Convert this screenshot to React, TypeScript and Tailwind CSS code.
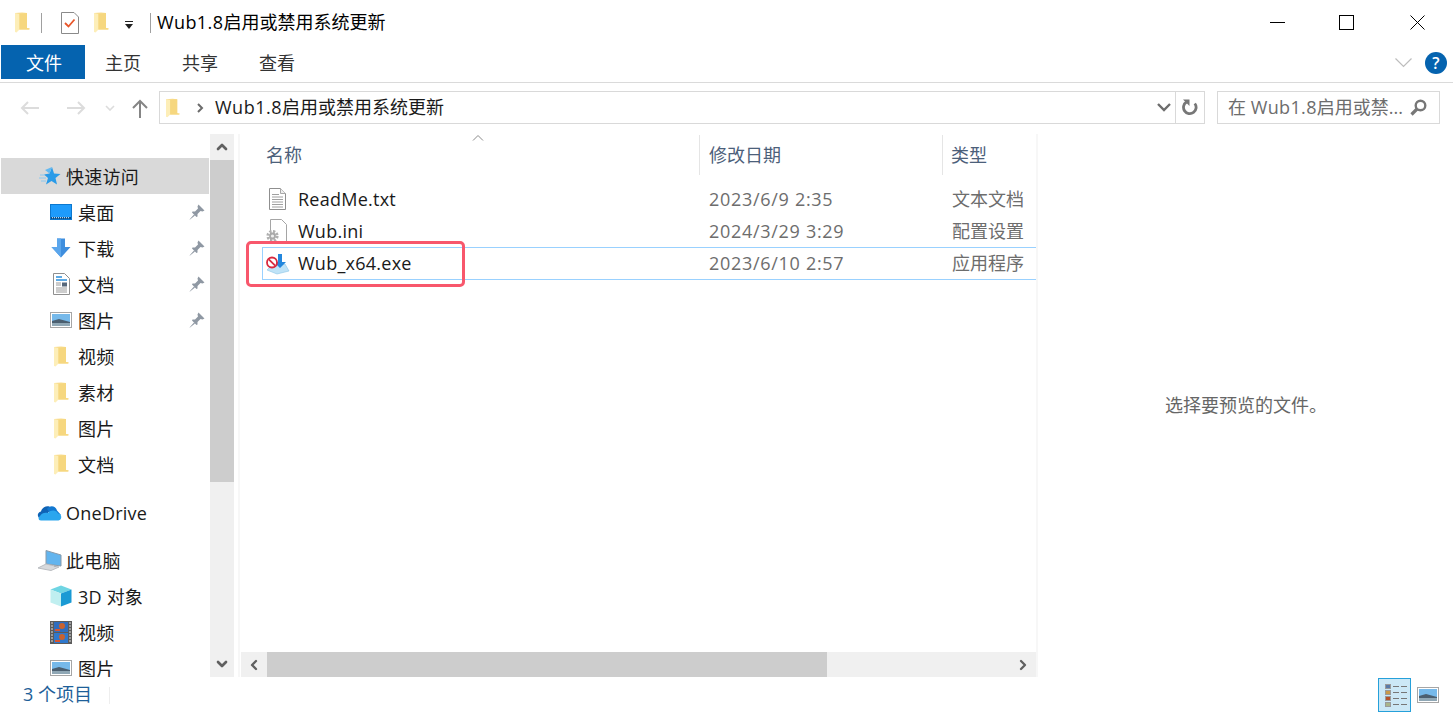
import { ChevronDown, ChevronLeft, ChevronRight, ChevronUp } from "lucide-react";

const FONT = "font-['Open_Sans','Noto_Sans_CJK_SC',sans-serif]";

function Folder({ className = "" }: { className?: string }) {
  return (
    <svg viewBox="0 0 15 21" className={className}>
      <path d="M0 1 L7 0.5 L12 1 L12 16 L14.5 16 L14.5 17.5 L4.5 17.5 L0.8 19 Z" fill="#f9dc8b" />
      <path d="M0 1 L4.5 2 L4.5 17.5 L1.5 20.5 L0 20 Z" fill="#fdeeb8" />
      <path d="M4.5 2 L12 1 L12 16 L14.5 17.5 L4.5 17.5 Z" fill="#f6d77f" />
    </svg>
  );
}

function Pin() {
  return (
    <svg viewBox="0 0 16 16" className="w-4 h-4 text-[#8f98a3]">
      <path d="M9.5 0.5 L15.5 6.5 L13.5 7.5 L11.5 7 L8.5 10 L8.5 12.5 L7.5 13 L3 8.5 L3.5 7.5 L6 7.5 L9 4.5 L8.5 2.5 Z" fill="currentColor" />
      <path d="M5 10.5 L0.5 15.5 L1 15.5 L6 11.5 Z" fill="currentColor" />
    </svg>
  );
}

function PicIcon({ className = "" }: { className?: string }) {
  return (
    <svg viewBox="0 0 22 16" className={className}>
      <rect x="0.5" y="0.5" width="21" height="15" fill="#fff" stroke="#a6a6a6" />
      <rect x="2" y="2" width="18" height="12" fill="#76b9ea" />
      <path d="M2 9 L9 7 L20 10 L20 14 L2 14 Z" fill="#4b5f70" />
      <rect x="2" y="11" width="18" height="3" fill="#8fa7b5" />
    </svg>
  );
}

function DocLines({ className = "" }: { className?: string }) {
  return (
    <svg viewBox="0 0 17 22" className={className}>
      <path d="M0.5 0.5 H11.5 L16.5 5.5 V21.5 H0.5 Z" fill="#fff" stroke="#8f8f8f" />
      <path d="M11.5 0.5 V5.5 H16.5" fill="#eee" stroke="#a8a8a8" />
      <path d="M3 6.5 H10 M3 9 H14 M3 11.5 H14 M3 14 H14 M3 16.5 H14 M3 19 H14" stroke="#a0a0a0" />
    </svg>
  );
}

const navIcons: Record<string, React.ReactNode> = {
  star: (
    <svg viewBox="0 0 22 20" className="w-[22px] h-5">
      <path d="M13 1 L15 7.5 L21.5 8 L16.5 12 L18 18.5 L12.5 15 L7 18.5 L9 12 L5 8.5 L10.5 7.5 Z" fill="#2a9be8" />
      <path d="M1 9 H6 M0 12 H7 M2 15 H7" stroke="#8cc8ef" />
      <path d="M6 4 L13 1 L10.5 7.5 Z" fill="#63b9f1" />
    </svg>
  ),
  desktop: (
    <svg viewBox="0 0 22 16" className="w-[22px] h-4">
      <rect x="0.5" y="0.5" width="21" height="15" fill="#1e9bfb" stroke="#0c78cf" />
      <rect x="1" y="13" width="20" height="2" fill="#0a4f8a" />
      <path d="M2 13.7 H20" stroke="#e6f3ff" strokeDasharray="1 1" />
    </svg>
  ),
  download: (
    <svg viewBox="0 0 20 20" className="w-5 h-5">
      <path d="M6 0.5 H14 V9 H19.5 L10 19.5 L0.5 9 H6 Z" fill="#3e8ede" />
      <path d="M6 0.5 H10 V19.5 L0.5 9 H6 Z" fill="#5ba6ec" />
    </svg>
  ),
  doc: (
    <svg viewBox="0 0 17 22" className="w-[17px] h-[22px]">
      <path d="M0.5 0.5 H11.5 L16.5 5.5 V21.5 H0.5 Z" fill="#fff" stroke="#8f8f8f" />
      <path d="M3 4 H9 M3 7 H14" stroke="#2a8fdc" strokeWidth="1.4" />
      <path d="M3 10 H8 M3 12 H8 M3 15 H14 M3 17 H14 M3 19 H14" stroke="#9a9a9a" />
      <rect x="9" y="9.5" width="5" height="4" fill="#56677a" />
    </svg>
  ),
  pic: <PicIcon className="w-[22px] h-4" />,
  folder: <Folder className="w-[15px] h-[21px]" />,
  onedrive: (
    <svg viewBox="0 0 25 17" className="w-[25px] h-[17px]">
      <path d="M4 15 C0 14 -0.5 8.5 4 7.5 C5 3 11 0.5 14.5 4 L11 9 Z" fill="#0f63b5" />
      <path d="M10 5 C13 0.5 19 2 20 6.5 L24 11 L13 9 Z" fill="#1278d1" />
      <path d="M4 16.5 C1 16.5 1 13.5 3 12 C5 8 9 8.5 11 9 C14 5.5 19.5 6 21 9.5 C25 9.5 25.5 15.5 21.5 16.5 Z" fill="#2ba6ee" />
    </svg>
  ),
  pc: (
    <svg viewBox="0 0 25 21" className="w-[25px] h-[21px]">
      <path d="M9 0.5 L24 5 V16 L9 14 Z" fill="#62b4ee" stroke="#8a9aa8" />
      <path d="M1 18 L9 14 L22 17 L14 20.5 Z" fill="#d7d9dc" stroke="#b9bcc0" />
      <path d="M18 15 V17" stroke="#9aa0a6" />
    </svg>
  ),
  cube: (
    <svg viewBox="0 0 22 22" className="w-[22px] h-[22px]">
      <path d="M11 0.5 L21.5 4.5 L11 8.5 L0.5 4.5 Z" fill="#6fd5e3" />
      <path d="M0.5 4.5 L11 8.5 V21.5 L0.5 17.5 Z" fill="#c0eff0" />
      <path d="M21.5 4.5 L11 8.5 V21.5 L21.5 17.5 Z" fill="#1a9ad4" />
    </svg>
  ),
  video: (
    <svg viewBox="0 0 22 23" className="w-[22px] h-[23px]">
      <rect width="22" height="23" fill="#5b5b5b" />
      <path d="M1 2 H3 M1 5 H3 M1 8 H3 M1 11 H3 M1 14 H3 M1 17 H3 M1 20 H3 M19 2 H21 M19 5 H21 M19 8 H21 M19 11 H21 M19 14 H21 M19 17 H21 M19 20 H21" stroke="#ddd" />
      <rect x="4" y="1" width="14" height="10" fill="#2f6dbe" />
      <rect x="4" y="12" width="14" height="10" fill="#2f78cc" />
      <circle cx="12" cy="5" r="3" fill="#c9622f" />
      <circle cx="12" cy="16" r="3" fill="#c9622f" />
      <rect x="5" y="8" width="5" height="2" fill="#d8552d" />
      <rect x="5" y="19" width="5" height="2" fill="#d8552d" />
    </svg>
  ),
};

const navItems = [
  { label: "桌面", icon: "desktop", pin: true },
  { label: "下载", icon: "download", pin: true },
  { label: "文档", icon: "doc", pin: true },
  { label: "图片", icon: "pic", pin: true },
  { label: "视频", icon: "folder", pin: false },
  { label: "素材", icon: "folder", pin: false },
  { label: "图片", icon: "folder", pin: false },
  { label: "文档", icon: "folder", pin: false },
];

function NavRow({ label, icon, pin }: { label: string; icon: string; pin?: boolean }) {
  return (
    <div className="flex items-center shrink-0 h-9">
      <div className="w-[22px] ml-[49px] flex justify-center shrink-0">{navIcons[icon]}</div>
      <span className="ml-[6px] mt-[2px] flex-1 text-[18px] tracking-[0.2px] text-[#1a1a1a]">{label}</span>
      {pin && (
        <span className="mr-[4px]">
          <Pin />
        </span>
      )}
    </div>
  );
}

function TopRow({ label, icon, className = "" }: { label: string; icon: string; className?: string }) {
  return (
    <div className={`flex items-center h-9 shrink-0 ${className}`}>
      <div className="w-[25px] ml-[36px] flex justify-center shrink-0">{navIcons[icon]}</div>
      <span className="ml-[4px] mt-[2px] text-[18px] tracking-[0.25px] text-[#1a1a1a]">{label}</span>
    </div>
  );
}

const files = [
  { name: "ReadMe.txt", date: "2023/6/9 2:35", type: "文本文档", icon: "txt" },
  { name: "Wub.ini", date: "2024/3/29 3:29", type: "配置设置", icon: "ini" },
  { name: "Wub_x64.exe", date: "2023/6/10 2:57", type: "应用程序", icon: "exe" },
];

function FileIcon({ kind }: { kind: string }) {
  if (kind === "txt") return <DocLines className="w-[17px] h-[22px] ml-[3px]" />;
  if (kind === "ini")
    return (
      <svg viewBox="0 0 22 24" className="w-[22px] h-6">
        <path d="M4.5 0.5 H15.5 L20.5 5.5 V23.5 H4.5 Z" fill="#fff" stroke="#a5a5a5" />
        <circle cx="6.5" cy="17" r="4.6" fill="none" stroke="#b0b0b0" strokeWidth="3" strokeDasharray="2.2 1.4" />
        <circle cx="6.5" cy="17" r="3.4" fill="#a9a9a9" />
        <circle cx="6.5" cy="17" r="1.6" fill="#eee" />
      </svg>
    );
  return (
    <svg viewBox="0 0 24 22" className="w-6 h-[22px]">
      <path d="M1 17 L7 11 L19 11 L23 18 L11 21 Z" fill="#bfe3f7" stroke="#8cc4e6" strokeWidth="0.6" />
      <path d="M12 1 H16 V9 H20 L14 15 L8 9 H12 Z" fill="#2387dd" />
      <circle cx="6" cy="9.5" r="5" fill="#fff" stroke="#d8293f" strokeWidth="1.8" />
      <path d="M2.8 6.3 L9.2 12.7" stroke="#d8293f" strokeWidth="1.8" />
    </svg>
  );
}

export default function App() {
  return (
    <div className={`${FONT} w-[1453px] h-[713px] bg-white relative overflow-hidden flex flex-col`}>
      {/* title bar */}
      <div className="h-[45px] flex items-center shrink-0">
        <Folder className="w-[15px] h-[21px] ml-[15px]" />
        <div className="w-px h-[20px] bg-[#a0a0a0] ml-[11px]" />
        <svg viewBox="0 0 18 22" className="w-[18px] h-[22px] ml-[19px]">
          <path d="M0.5 0.5 H13 L17.5 5 V21.5 H0.5 Z" fill="#fff" stroke="#8a8a8a" />
          <path d="M4 11 L7.5 14.5 L13.5 7.5" fill="none" stroke="#e8562a" strokeWidth="1.8" />
        </svg>
        <Folder className="w-[15px] h-[21px] ml-[15px]" />
        <svg viewBox="0 0 10 9" className="w-[10px] h-[9px] ml-[15px] mt-[6px]">
          <path d="M1 0.5 H9" stroke="#222" />
          <path d="M1 3 H9 L5 8 Z" fill="#222" />
        </svg>
        <div className="w-px h-[20px] bg-[#a0a0a0] ml-[16px]" />
        <span className="ml-[6px] text-[18px] text-black">
          <span className="tracking-[0.4px]">Wub1.8</span>启用或禁用系统更新
        </span>
        <div className="flex-1" />
        <div className="w-[15px] h-px bg-black" />
        <div className="w-[15px] h-[15px] border border-black ml-[54px]" />
        <svg viewBox="0 0 15 15" className="w-[15px] h-[15px] ml-[56px] mr-[28px]">
          <path d="M0.5 0.5 L14.5 14.5 M14.5 0.5 L0.5 14.5" stroke="#000" />
        </svg>
      </div>

      {/* ribbon tabs */}
      <div className="h-[38px] flex items-start shrink-0 border-b border-[#dadada]">
        <div className="ml-px w-[84px] h-[34px] pl-[2px] pt-[2px] bg-[#0563af] text-white text-[18px] flex items-center justify-center">文件</div>
        <span className="ml-5 mt-[5px] text-[18px] text-[#333]">主页</span>
        <span className="ml-[41px] mt-[5px] text-[18px] text-[#333]">共享</span>
        <span className="ml-[41px] mt-[5px] text-[18px] text-[#333]">查看</span>
        <div className="flex-1" />
        <svg viewBox="0 0 17 10" className="w-[17px] h-[10px] mt-[13px]">
          <path d="M0.5 0.5 L8.5 8.5 L16.5 0.5" fill="none" stroke="#bdbdbd" strokeWidth="1.2" />
        </svg>
        <div className="w-[22px] h-[22px] rounded-full bg-[#0563af] text-white text-[16px] font-semibold flex items-center justify-center ml-[13px] mr-[6px] mt-[7px]">?</div>
      </div>

      {/* address row */}
      <div className="h-[52px] flex items-center shrink-0 pb-[3px]">
        <svg viewBox="0 0 20 16" className="w-5 h-4 ml-5 text-[#dcdcdc]">
          <path d="M19 8 H2 M8 2 L2 8 L8 14" fill="none" stroke="currentColor" strokeWidth="2" />
        </svg>
        <svg viewBox="0 0 20 16" className="w-5 h-4 ml-[26px] text-[#dcdcdc]">
          <path d="M1 8 H18 M12 2 L18 8 L12 14" fill="none" stroke="currentColor" strokeWidth="2" />
        </svg>
        <svg viewBox="0 0 10 6" className="w-[10px] h-[6px] ml-[19px]">
          <path d="M1 1 L5 5 L9 1" fill="none" stroke="#dcdcdc" strokeWidth="1.6" />
        </svg>
        <svg viewBox="0 0 16 20" className="w-4 h-5 ml-[17px] mt-[2px]">
          <path d="M8 19 V2 M1 9 L8 2 L15 9" fill="none" stroke="#858585" strokeWidth="2" />
        </svg>
        <div className="ml-[11px] w-[1046px] h-[33px] border border-[#d9d9d9] flex items-center">
          <Folder className="w-[14px] h-5 ml-[6px]" />
          <svg viewBox="0 0 7 10" className="w-[7px] h-[10px] ml-[17px]">
            <path d="M1 1 L5 5 L1 9" fill="none" stroke="#6b6b6b" strokeWidth="2" />
          </svg>
          <span className="ml-[11px] text-[18px] text-[#1a1a1a]">
            <span className="tracking-[0.5px]">Wub1.8</span>启用或禁用系统更新
          </span>
          <div className="flex-1" />
          <svg viewBox="0 0 14 9" className="w-[14px] h-[9px] mr-[4px]">
            <path d="M1 1 L7 7 L13 1" fill="none" stroke="#6d6d6d" strokeWidth="2.4" />
          </svg>
          <div className="w-px h-full bg-[#d9d9d9]" />
          <svg viewBox="0 0 16 17" className="w-4 h-[17px] mx-[6px]">
            <path d="M4.5 3 A6.3 6.3 0 1 0 12.8 4.5" fill="none" stroke="#777" strokeWidth="2.8" />
            <path d="M1 0.5 H7.5 V7 Z" fill="#777" />
          </svg>
        </div>
        <div className="ml-3 w-[223px] h-[33px] border border-[#d9d9d9] flex items-center">
          <span className="ml-[10px] flex-1 text-[18px] text-[#6d6d6d]">
            在 <span className="tracking-[0.35px]">Wub1.8</span>启用或禁...
          </span>
          <svg viewBox="0 0 17 17" className="w-[17px] h-[17px] mr-3">
            <circle cx="10.5" cy="6.5" r="4.8" fill="none" stroke="#777" strokeWidth="2.4" />
            <path d="M7 10 L1.5 15.5" stroke="#777" strokeWidth="3.2" />
          </svg>
        </div>
      </div>

      {/* body */}
      <div className="h-[543px] mt-[-1px] flex shrink-0">
        {/* nav pane */}
        <div className="w-[208px] ml-px mr-px overflow-hidden flex flex-col shrink-0 pt-6">
          <div className="bg-[#d9d9d9]">
            <TopRow label="快速访问" icon="star" />
          </div>
          {navItems.map((item, i) => (
            <NavRow key={i} label={item.label} icon={item.icon} pin={item.pin} />
          ))}
          <TopRow label="OneDrive" icon="onedrive" className="mt-3" />
          <TopRow label="此电脑" icon="pc" className="mt-3" />
          <NavRow label="3D 对象" icon="cube" />
          <NavRow label="视频" icon="video" />
          <NavRow label="图片" icon="pic" />
        </div>

        {/* nav scrollbar */}
        <div className="w-6 bg-[#f0f0f0] flex flex-col shrink-0">
          <div className="h-[26px] flex items-center justify-center">
            <ChevronUp className="w-4 h-4 text-[#606060]" strokeWidth={4} />
          </div>
          <div className="h-[322px] bg-[#cdcdcd]" />
          <div className="flex-1" />
          <div className="h-[26px] flex items-center justify-center">
            <ChevronDown className="w-4 h-4 text-[#606060]" strokeWidth={4} />
          </div>
        </div>

        {/* file list */}
        <div className="w-[800px] ml-[4px] border-l-2 border-r-2 border-[#f7f7f7] flex flex-col shrink-0 relative">
          <div className="h-[41px] flex items-center shrink-0 relative">
            <span className="ml-[26px] mt-[2px] w-[433px] text-[18px] text-[#4c607a]">名称</span>
            <div className="w-px h-[40px] bg-[#e5e5e5]" />
            <span className="ml-[9px] mt-[2px] w-[233px] text-[18px] text-[#4c607a]">修改日期</span>
            <div className="w-px h-[40px] bg-[#e5e5e5]" />
            <span className="ml-2 mt-[2px] text-[18px] text-[#4c607a]">类型</span>
            <svg viewBox="0 0 12 6" className="absolute left-[232px] top-[1px] w-3 h-[6px]">
              <path d="M1 5.5 L6 0.5 L11 5.5" fill="none" stroke="#8a8a8a" />
            </svg>
          </div>
          <div className="flex-1 pt-2 overflow-hidden">
            {files.map((f) => (
              <div
                key={f.name}
                className={`ml-[22px] flex items-center ${f.icon === "exe" ? "h-[33px] border-y border-l border-[#99d1ff]" : "h-8"}`}
              >
                <div className={`w-[24px] shrink-0 flex ${f.icon === "exe" ? "ml-[3px]" : "ml-[4px]"}`}>
                  <FileIcon kind={f.icon} />
                </div>
                <span className="ml-[8px] w-[411px] text-[18px] tracking-[0.25px] text-[#1a1a1a] shrink-0">{f.name}</span>
                <span className="w-[243px] text-[18px] tracking-[0.7px] text-[#6d6d6d] shrink-0">{f.date}</span>
                <span className="text-[18px] text-[#6d6d6d] whitespace-nowrap">{f.type}</span>
              </div>
            ))}
          </div>
          <div className="h-[25px] ml-[1px] bg-[#f0f0f0] flex items-center shrink-0">
            <div className="w-[26px] flex justify-center">
              <ChevronLeft className="w-4 h-4 text-[#606060]" strokeWidth={3.5} />
            </div>
            <div className="w-[560px] h-full bg-[#cdcdcd]" />
            <div className="flex-1" />
            <div className="w-[26px] flex justify-center">
              <ChevronRight className="w-4 h-4 text-[#606060]" strokeWidth={3.5} />
            </div>
          </div>
        </div>

        {/* preview */}
        <div className="flex-1 flex justify-center pt-[258px]">
          <span className="text-[18px] text-[#666] ml-px">选择要预览的文件。</span>
        </div>
      </div>

      {/* status bar */}
      <div className="flex-1 flex items-center">
        <span className="ml-[23px] mb-[2px] text-[18px] text-[#1e5f99]">3 个项目</span>
        <div className="w-px h-[17px] bg-[#eeeeee] ml-[17px]" />
        <div className="flex-1" />
        <div className="w-[33px] h-[34px] bg-[#cce8f6] border border-[#26a0da] flex flex-col justify-center gap-[1px] pl-[6px]">
          {["#5b7ba8", "#c99a4a", "#b5522a", "#a9b58a"].map((c) => (
            <div key={c} className="flex items-center gap-[2px]">
              <div className="w-[6px] h-[5px] border border-[#9a9a9a]" style={{ background: c }} />
              <div className="w-[6px] h-px bg-[#777]" />
              <div className="w-[6px] h-px bg-[#777]" />
            </div>
          ))}
        </div>
        <PicIcon className="w-[22px] h-4 ml-[6px] mr-[14px]" />
      </div>

      {/* red annotation box */}
      <div className="absolute left-[246px] top-[241px] w-[219px] h-[46px] border-[3px] border-[#f8576c] rounded-[5px]" />
    </div>
  );
}
